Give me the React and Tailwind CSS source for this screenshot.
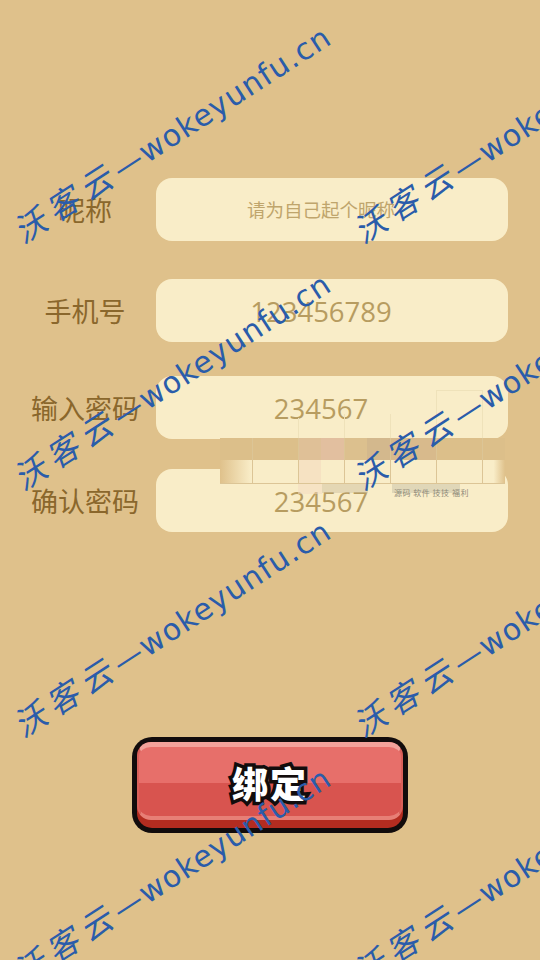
const FONT = "font-['Noto_Sans_CJK_SC','Noto_Sans',sans-serif]";

const FIELDS = [
  { label: "昵称", placeholder: "请为自己起个昵称", rowClass: "mt-[178px]" },
  { label: "手机号", value: "123456789", rowClass: "mt-[38px]" },
  { label: "输入密码", value: "234567", rowClass: "mt-[34px]" },
  { label: "确认密码", value: "234567", rowClass: "mt-[30px]" },
];

function Field({ label, value, placeholder, rowClass }) {
  return (
    <div className={`flex items-center ${rowClass}`}>
      <div className="w-[170px] shrink-0 text-center text-[27px] leading-none text-[#8a672c]">{label}</div>
      <div className="ml-[-14px] flex h-[63px] w-[352px] items-center justify-center rounded-[16px] bg-[#f9edc8] pr-[22px]">
        {placeholder ? (
          <span className="text-[18.5px] text-[#bfa56c]">{placeholder}</span>
        ) : (
          <span className="pt-[2px] font-['Open_Sans',sans-serif] text-[27.5px] text-[#b79c60]">{value}</span>
        )}
      </div>
    </div>
  );
}

// faded picture bleeding through between the password cards
function GhostImage() {
  const cell = "w-[46px] border-l border-[#dcc596]";
  const faint = "w-[46px] border-l border-[#efe2ba]";
  return (
    <div className="pointer-events-none absolute left-[220px] top-[390px] flex w-[285px] flex-col">
      <div className="flex h-[48px] items-end pl-[78px]">
        <div className={`${faint} h-[20px]`} />
        <div className={`${faint} h-[24px]`} />
        <div className={`${faint} h-[24px]`} />
        <div className={`${faint} h-full border-t`} />
        <div className="h-full border-l border-[#efe2ba]" />
      </div>
      <div className="flex h-[22px] bg-[#dcbf8a] pl-[32px]">
        <div className={cell} />
        <div className={`${cell} bg-[linear-gradient(90deg,#dfc097_50%,#e2bf9f_50%)]`} />
        <div className={`${cell} bg-[linear-gradient(90deg,#dcc08e_50%,#d3b88d_50%)]`} />
        <div className={`${cell} bg-[#d8ba8c]`} />
        <div className={cell} />
        <div className="border-l border-[#dcc596]" />
      </div>
      <div className="flex h-[24px] border-b border-[#dcc596] bg-[linear-gradient(90deg,#dfc18b,#f9edc8_11%,#f9edc8_96%,#dfc18b)] pl-[32px]">
        <div className={cell} />
        <div className={`${cell} bg-[linear-gradient(90deg,#f6e2c2_50%,transparent_50%)]`} />
        <div className={cell} />
        <div className={cell} />
        <div className={cell} />
        <div className="border-l border-[#dcc596]" />
      </div>
      <div className="flex h-[16px] pl-[78px]">
        <div className="h-[10px] w-[24px] bg-[#f3d9c0]/50" />
        <div className="h-[9px] w-[46px] bg-[#cfc2a0]/50" />
        <div className="w-[24px]" />
        <div className="relative h-[9px] w-[68px] bg-[#cfc8ad]/60">
          <span className="absolute left-[2px] top-[5px] whitespace-nowrap text-[8px] leading-none tracking-[0.5px] text-[#8f8a78]">
            源码 软件 技技 福利
          </span>
        </div>
      </div>
    </div>
  );
}

function BindButton() {
  return (
    <div className="mx-auto mt-[205px] h-[96px] w-[276px] rounded-[20px] bg-[#120c0c] p-[5px]">
      <div className="h-full rounded-[15px] bg-[#b32c20] pb-[8px]">
        <div className="flex h-full items-center justify-center rounded-[14px] border-x-[2px] border-t-[5px] border-b-[4px] border-x-[#d9605a] border-t-[#f3a29b] border-b-[#e77f76] bg-[linear-gradient(#e76f6a_52%,#d8544f_52%)]">
          <span className="text-[36px] font-black leading-none tracking-[2px] text-white [-webkit-text-stroke:7px_#120c0c] [paint-order:stroke_fill]">
            绑定
          </span>
        </div>
      </div>
    </div>
  );
}

function Watermarks() {
  return (
    <div className="pointer-events-none absolute inset-0 grid auto-rows-[247px] grid-cols-[340px_340px] pl-[24px] pt-[214px]">
      {[0, 1, 2, 3, 4, 5, 6, 7].map((n) => (
        <div
          key={n}
          className="h-[32px] origin-[0%_100%] rotate-[-33deg] whitespace-nowrap font-['Noto_Sans_CJK_SC',sans-serif] text-[30px] leading-none text-[#2a5caa]"
        >
          <span className="text-[32px] italic tracking-[7px]">沃客云</span>
          <span className="font-['DejaVu_Sans',sans-serif] tracking-[1.2px]">—wokeyunfu.cn</span>
        </div>
      ))}
    </div>
  );
}

export default function App() {
  return (
    <div className={`relative flex h-[960px] w-[540px] flex-col overflow-hidden bg-[#dfc18b] ${FONT}`}>
      {FIELDS.map((field) => (
        <Field key={field.label} {...field} />
      ))}
      <GhostImage />
      <BindButton />
      <Watermarks />
    </div>
  );
}
